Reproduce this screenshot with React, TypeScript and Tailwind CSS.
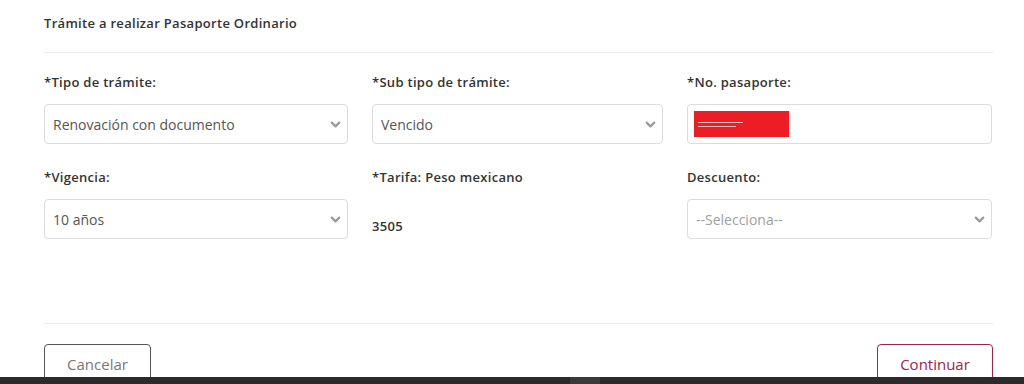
import { ChevronDown } from "lucide-react";

function Select({ value, placeholder }: { value?: string; placeholder?: string }) {
  return (
    <div className="relative h-[40px] w-full rounded-[4px] border border-[#dcdcdc] bg-white flex items-center pl-[8px] pr-[4px]">
      <span className={`flex-1 text-[14px] ${value ? "text-[#555]" : "text-[#a0a0a0]"}`}>
        {value ?? placeholder}
      </span>
      <ChevronDown className="h-[15px] w-[15px] text-[#9a9a9a]" strokeWidth={3.5} />
    </div>
  );
}

function Label({ children }: { children: React.ReactNode }) {
  return (
    <div className="text-[13px] leading-[16px] font-semibold tracking-[0.3px] text-[#333]">{children}</div>
  );
}

export default function App() {
  return (
    <div
      className="h-[384px] w-[1024px] bg-white flex flex-col overflow-hidden"
      style={{ fontFamily: '"Open Sans", "Liberation Sans", sans-serif' }}
    >
      <div className="flex-1 overflow-hidden px-[44px]">
        <div className="pt-[15px] text-[13px] leading-[16px] font-semibold tracking-[0.3px] text-[#333]">
          Trámite a realizar Pasaporte Ordinario
        </div>
        <div className="mt-[21px] h-px w-[949px] bg-[#ececec]" />

        <div className="mt-[21px] grid grid-cols-[304px_291px_305px] gap-x-[24px] w-[949px]">
          <div>
            <Label>*Tipo de trámite:</Label>
            <div className="mt-[14px]">
              <Select value="Renovación con documento" />
            </div>
          </div>
          <div>
            <Label>*Sub tipo de trámite:</Label>
            <div className="mt-[14px]">
              <Select value="Vencido" />
            </div>
          </div>
          <div>
            <Label>*No. pasaporte:</Label>
            <div className="mt-[14px] h-[40px] rounded-[4px] border border-[#dcdcdc] bg-white flex items-center pl-[6px]">
              <div className="h-[26px] w-[95px] bg-[#ee1c25] flex flex-col justify-center gap-[3px] pl-[4px]">
                <div className="h-[1px] w-[45px] bg-white/70" />
                <div className="h-[1px] w-[38px] bg-white/70" />
              </div>
            </div>
          </div>

          <div className="mt-[25px]">
            <Label>*Vigencia:</Label>
            <div className="mt-[14px]">
              <Select value="10 años" />
            </div>
          </div>
          <div className="mt-[25px]">
            <Label>*Tarifa: Peso mexicano</Label>
            <div className="mt-[33px] text-[13px] leading-[16px] font-semibold tracking-[0.3px] text-[#333]">
              3505
            </div>
          </div>
          <div className="mt-[25px]">
            <Label>Descuento:</Label>
            <div className="mt-[14px]">
              <Select placeholder="--Selecciona--" />
            </div>
          </div>
        </div>

        <div className="mt-[84px] h-px w-[949px] bg-[#ececec]" />

        <div className="mt-[20px] flex justify-between w-[949px]">
          <button className="h-[40px] w-[107px] rounded-[4px] border border-[#555] bg-white text-[15px] text-[#777]">
            Cancelar
          </button>
          <button className="h-[40px] w-[116px] rounded-[4px] border border-[#9d2449] bg-white text-[15px] text-[#9d2449]">
            Continuar
          </button>
        </div>
      </div>
      <div className="h-[7px] bg-[#2b2b2b] flex">
        <div className="ml-[570px] w-[30px] bg-[#3a3a3a]" />
      </div>
    </div>
  );
}
